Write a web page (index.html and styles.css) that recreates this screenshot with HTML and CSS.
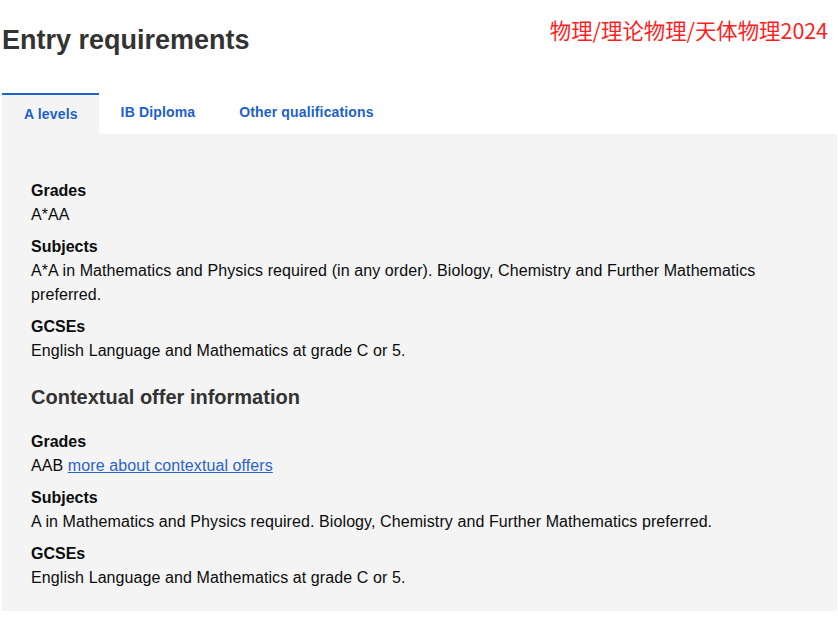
FILE: index.html
```html
<!DOCTYPE html>
<html lang="en">
<head>
    <meta charset="UTF-8">
    <meta name="viewport" content="width=device-width, initial-scale=1.0">
    <title>Entry requirements</title>
    <link rel="stylesheet" href="styles.css">
</head>
<body>
    <div class="page">
        <h1 class="page-title">Entry requirements</h1>
        <div class="stamp">物理/理论物理/天体物理2024</div>

        <ul class="tabs">
            <li class="tab active">A levels</li>
            <li class="tab">IB Diploma</li>
            <li class="tab">Other qualifications</li>
        </ul>

        <div class="panel">
            <dl class="reqs">
                <dt>Grades</dt>
                <dd>A*AA</dd>
                <dt>Subjects</dt>
                <dd>A*A in Mathematics and Physics required (in any order). Biology, Chemistry and Further Mathematics preferred.</dd>
                <dt>GCSEs</dt>
                <dd>English Language and Mathematics at grade C or 5.</dd>
            </dl>

            <h2 class="panel-heading">Contextual offer information</h2>

            <dl class="reqs">
                <dt>Grades</dt>
                <dd>AAB <a href="#">more about contextual offers</a></dd>
                <dt>Subjects</dt>
                <dd>A in Mathematics and Physics required. Biology, Chemistry and Further Mathematics preferred.</dd>
                <dt>GCSEs</dt>
                <dd>English Language and Mathematics at grade C or 5.</dd>
            </dl>
        </div>
    </div>
</body>
</html>
```

FILE: styles.css
```css
body {
    margin: 0;
    font-family: "Liberation Sans", Arial, sans-serif;
    color: #0b0c0c;
    background: #fff;
}
.page {
    position: relative;
    padding: 24px 1px 0 2px;
}
.page-title {
    margin: 0 0 37px 0;
    font-size: 27px;
    line-height: 32px;
    font-weight: bold;
    color: #333;
}
.stamp {
    position: absolute;
    top: 16px;
    right: 10px;
    font-family: "Noto Sans CJK SC", "Liberation Sans", sans-serif;
    font-size: 21.4px;
    line-height: 28px;
    color: #ff1e1e;
}
.tabs {
    display: flex;
    align-items: flex-start;
    margin: 0;
    padding: 0;
    list-style: none;
}
.tab {
    padding: 11px 22px 12px;
    font-size: 14px;
    line-height: 16px;
    font-weight: bold;
    letter-spacing: 0.15px;
    color: #1d5fcc;
}
.tab.active {
    padding-right: 21px;
    border-top: 2px solid #1d64d0;
    background: #f4f4f4;
}
.panel {
    background: #f4f4f4;
    padding: 45px 29px 21px;
}
.reqs {
    margin: 0;
    font-size: 16px;
    line-height: 24px;
}
.reqs dt {
    margin-top: 8px;
    font-weight: bold;
}
.reqs dt:first-child {
    margin-top: 0;
}
.reqs dd {
    margin: 0;
    letter-spacing: 0.09px;
}
.reqs a {
    color: #2b64c8;
}
.panel-heading {
    margin: 20px 0 19px;
    font-size: 20px;
    line-height: 28px;
    font-weight: bold;
    color: #333;
}
```
